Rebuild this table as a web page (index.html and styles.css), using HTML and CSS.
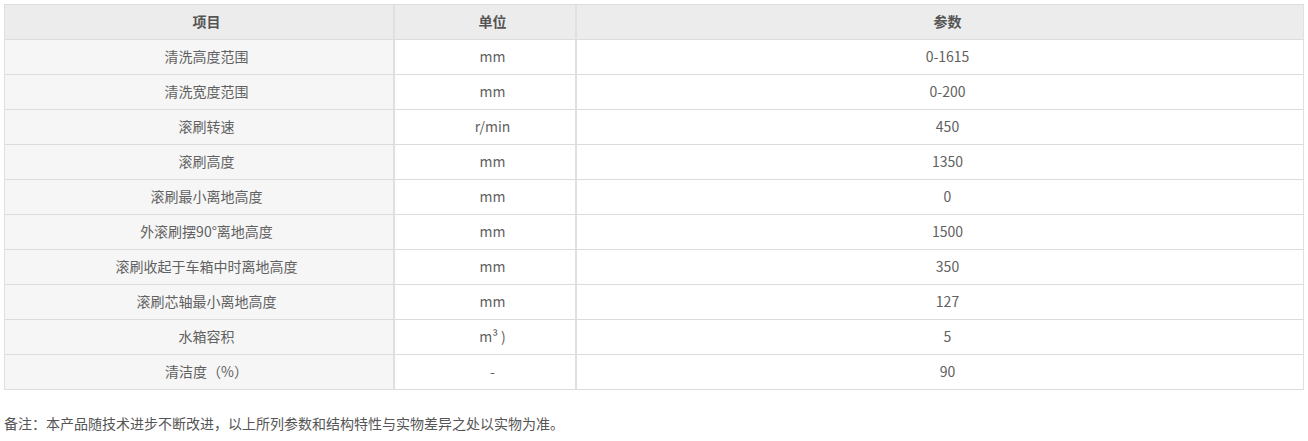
FILE: index.html
```html
<!DOCTYPE html>
<html lang="zh-CN">
<head>
<meta charset="utf-8">
<title>参数</title>
<link rel="stylesheet" href="styles.css">
</head>
<body>
<table class="spec">
  <colgroup>
    <col class="c1"><col class="c2"><col class="c3">
  </colgroup>
  <thead>
    <tr><th>项目</th><th>单位</th><th>参数</th></tr>
  </thead>
  <tbody>
    <tr><td class="name">清洗高度范围</td><td>mm</td><td>0-1615</td></tr>
    <tr><td class="name">清洗宽度范围</td><td>mm</td><td>0-200</td></tr>
    <tr><td class="name">滚刷转速</td><td>r/min</td><td>450</td></tr>
    <tr><td class="name">滚刷高度</td><td>mm</td><td>1350</td></tr>
    <tr><td class="name">滚刷最小离地高度</td><td>mm</td><td>0</td></tr>
    <tr><td class="name">外滚刷摆90°离地高度</td><td>mm</td><td>1500</td></tr>
    <tr><td class="name">滚刷收起于车箱中时离地高度</td><td>mm</td><td>350</td></tr>
    <tr><td class="name">滚刷芯轴最小离地高度</td><td>mm</td><td>127</td></tr>
    <tr><td class="name">水箱容积</td><td>m³ )</td><td>5</td></tr>
    <tr><td class="name">清洁度（%）</td><td>-</td><td>90</td></tr>
  </tbody>
</table>
<p class="note">备注：本产品随技术进步不断改进，以上所列参数和结构特性与实物差异之处以实物为准。</p>
</body>
</html>
```
FILE: styles.css
```css
html, body {
  margin: 0;
  padding: 0;
  background: #fff;
}
body {
  padding: 4px;
  font-family: "Noto Sans CJK SC", "Microsoft YaHei", sans-serif;
  font-size: 14px;
  color: #555;
}
.spec {
  width: 1300px;
  border-collapse: separate;
  border-spacing: 0;
  table-layout: fixed;
  border-top: 1px solid #dcdcdc;
}
.c1 { width: 390px; }
.c2 { width: 182px; }
.c3 { width: 728px; }
.spec th,
.spec td {
  height: 35px;
  padding: 0 0 2px 15px;
  text-align: center;
  vertical-align: middle;
  border-left: 1px solid #e0e0e0;
  border-right: 1px solid #e0e0e0;
  border-bottom: 1px solid #dcdcdc;
  line-height: 20px;
  box-sizing: border-box;
}
.spec th {
  background: #ececec;
  font-weight: bold;
  color: #555;
}
.spec td {
  color: #616161;
}
.spec td.name {
  background: #f6f6f6;
}
.note {
  margin: 23px 0 0;
  font-size: 14px;
  line-height: 20px;
  color: #555;
}
```
